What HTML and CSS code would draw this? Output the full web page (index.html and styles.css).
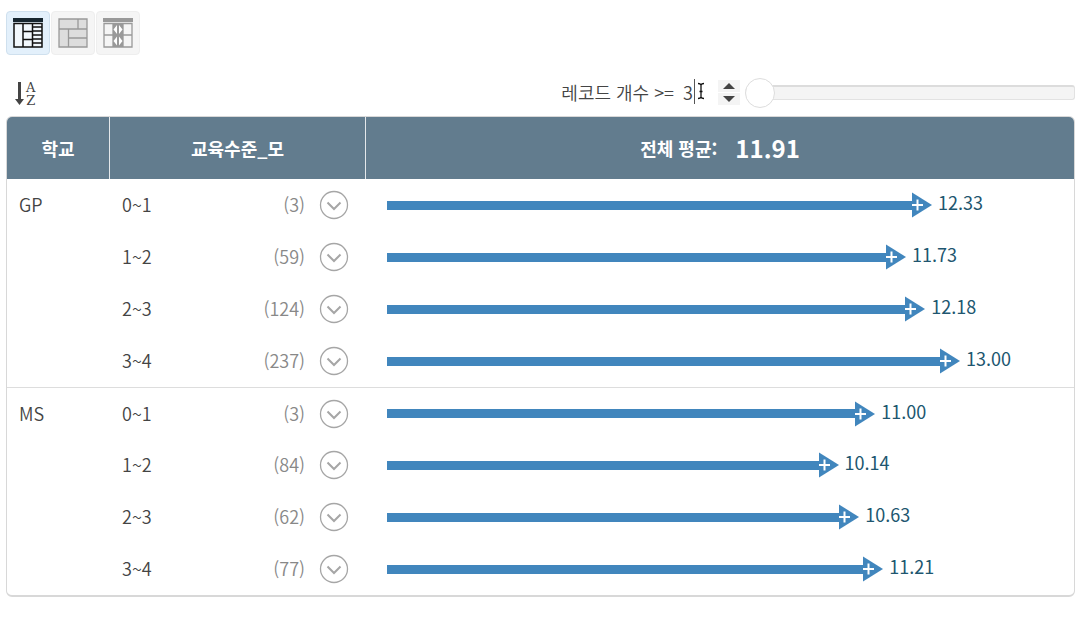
FILE: index.html
```html
<!DOCTYPE html>
<html lang="ko">
<head>
    <meta charset="UTF-8">
    <meta name="viewport" content="width=device-width, initial-scale=1.0">
    <title>전체 평균</title>
    <link rel="stylesheet" href="styles.css">
</head>
<body>
    <svg class="symbols" aria-hidden="true">
        <symbol id="chevron" viewBox="0 0 30 30">
            <circle cx="15" cy="15" r="13.5" fill="none" stroke="#a6a6a6" stroke-width="1.3"/>
            <path d="M8.5 12.5l6.5 6.5 6.5-6.5" fill="none" stroke="#a6a6a6" stroke-width="2"/>
        </symbol>
        <symbol id="head" viewBox="0 0 20 26">
            <path d="M0 0.5l20 12.5L0 25.5z" fill="#4186bd"/>
            <path d="M0 13h11M5.5 7.5v11" stroke="#fff" stroke-width="2"/>
        </symbol>
    </svg>
    <div class="views">
        <button class="view active" aria-label="table">
            <svg width="30" height="30" viewBox="0 0 30 30">
                <path d="M0 0h30v4H0z" fill="#17262f"/>
                <path d="M1 5.500h28v23.500H1z" fill="#f2f8fd" stroke="#111" stroke-width="1.500"/>
                <path d="M10 5v24M19.500 5v24M10 13.500h9.500M10 21.500h9.500M19.500 9h9.500M19.500 13h9.500M19.500 17h9.500M19.500 21h9.500M19.500 25h9.500" fill="none" stroke="#111" stroke-width="1.500"/>
            </svg>
        </button>
        <button class="view" aria-label="treemap">
            <svg width="30" height="30" viewBox="0 0 30 30">
                <path d="M1 1h28v28H1zM1 11h28M20 1v10M10.500 11v18M10.500 20H29" fill="#ddd" stroke="#999" stroke-width="1.300"/>
            </svg>
        </button>
        <button class="view" aria-label="matrix">
            <svg width="30" height="30" viewBox="0 0 30 30">
                <path d="M0 0h30v4H0z" fill="#999"/>
                <path d="M10 5h10v24H10z" fill="#999"/>
                <path d="M1 5.500h28v23.500H1zM1 17h28M10 5v24M20 5v24" fill="none" stroke="#999" stroke-width="1.300"/>
                <path d="M14 7v9l-3.500-4.500zM16 7v9l3.500-4.500zM14 18.500v9L10.500 23zM16 18.500v9l3.500-4.500z" fill="#fff"/>
            </svg>
        </button>
    </div>
    <div class="toolbar">
        <button class="sort" aria-label="sort">
            <svg width="9" height="24" viewBox="0 0 9 24">
                <path d="M4.500 0v19" stroke="#444" stroke-width="3"/>
                <path d="M0 17h9l-4.500 6z" fill="#444"/>
            </svg>
            <span class="letters"><span>A</span><span>Z</span></span>
        </button>
        <div class="filter">
            <label for="count">레코드 개수 &gt;=</label>
            <div class="number">
                <input type="text" id="count" value="3">
                <svg class="cursor" width="20" height="28" viewBox="0 0 20 28" aria-hidden="true">
                    <path d="M1.500 1v25" stroke="#555"/>
                    <path d="M5 5.500q2.500 0 3 1.500q.500-1.500 3-1.500M8 7v12M5 20.500q2.500 0 3-1.500q.500 1.500 3 1.500M6.500 13.500h3" fill="none" stroke="#111" stroke-width="1.300"/>
                </svg>
            </div>
            <div class="spinner">
                <button aria-label="up"><svg width="12" height="6" viewBox="0 0 12 6"><path d="M6 0l6 6H0z" fill="#444"/></svg></button>
                <button aria-label="down"><svg width="12" height="6" viewBox="0 0 12 6"><path d="M0 0h12L6 6z" fill="#444"/></svg></button>
            </div>
            <input type="range" id="range" min="3" max="237" value="3" aria-label="레코드 개수">
        </div>
    </div>
    <div class="panel">
        <table>
            <thead>
                <tr>
                    <th class="school">학교</th>
                    <th class="level">교육수준_모</th>
                    <th><div class="average">전체 평균: <span class="total">11.91</span></div></th>
                </tr>
            </thead>
            <tbody>
                <tr>
                    <td class="name" rowspan="4">GP</td>
                    <td><div class="item"><span>0~1</span><span class="records">(3)</span><button class="more" aria-label="more"><svg><use href="#chevron"/></svg></button></div></td>
                    <td><div class="bar"><div class="line" style="width: 81.7%"><svg><use href="#head"/></svg></div><span>12.33</span></div></td>
                </tr>
                <tr>
                    <td><div class="item"><span>1~2</span><span class="records">(59)</span><button class="more" aria-label="more"><svg><use href="#chevron"/></svg></button></div></td>
                    <td><div class="bar"><div class="line" style="width: 77.8%"><svg><use href="#head"/></svg></div><span>11.73</span></div></td>
                </tr>
                <tr>
                    <td><div class="item"><span>2~3</span><span class="records">(124)</span><button class="more" aria-label="more"><svg><use href="#chevron"/></svg></button></div></td>
                    <td><div class="bar"><div class="line" style="width: 80.7%"><svg><use href="#head"/></svg></div><span>12.18</span></div></td>
                </tr>
                <tr>
                    <td><div class="item"><span>3~4</span><span class="records">(237)</span><button class="more" aria-label="more"><svg><use href="#chevron"/></svg></button></div></td>
                    <td><div class="bar"><div class="line" style="width: 85.9%"><svg><use href="#head"/></svg></div><span>13.00</span></div></td>
                </tr>
            </tbody>
            <tbody>
                <tr>
                    <td class="name" rowspan="4">MS</td>
                    <td><div class="item"><span>0~1</span><span class="records">(3)</span><button class="more" aria-label="more"><svg><use href="#chevron"/></svg></button></div></td>
                    <td><div class="bar"><div class="line" style="width: 73.2%"><svg><use href="#head"/></svg></div><span>11.00</span></div></td>
                </tr>
                <tr>
                    <td><div class="item"><span>1~2</span><span class="records">(84)</span><button class="more" aria-label="more"><svg><use href="#chevron"/></svg></button></div></td>
                    <td><div class="bar"><div class="line" style="width: 67.7%"><svg><use href="#head"/></svg></div><span>10.14</span></div></td>
                </tr>
                <tr>
                    <td><div class="item"><span>2~3</span><span class="records">(62)</span><button class="more" aria-label="more"><svg><use href="#chevron"/></svg></button></div></td>
                    <td><div class="bar"><div class="line" style="width: 70.8%"><svg><use href="#head"/></svg></div><span>10.63</span></div></td>
                </tr>
                <tr>
                    <td><div class="item"><span>3~4</span><span class="records">(77)</span><button class="more" aria-label="more"><svg><use href="#chevron"/></svg></button></div></td>
                    <td><div class="bar"><div class="line" style="width: 74.4%"><svg><use href="#head"/></svg></div><span>11.21</span></div></td>
                </tr>
            </tbody>
        </table>
    </div>
</body>
</html>
```
FILE: styles.css
```css
* {
    box-sizing: border-box;
}
body {
    margin: 0;
    padding: 11px 3px 0 6px;
    background: #fff;
    font-family: "Noto Sans CJK KR", sans-serif;
    font-size: 18px;
    font-weight: 350;
    line-height: 26px;
    color: #444;
}
button, input {
    font: inherit;
    color: inherit;
    margin: 0;
    padding: 0;
    border: none;
    background: none;
}
button {
    cursor: pointer;
}
svg {
    display: block;
    flex: none;
}
.symbols {
    position: absolute;
    width: 0;
    height: 0;
}
.views {
    display: flex;
    gap: 1px;
}
.view {
    display: flex;
    align-items: center;
    justify-content: center;
    width: 44px;
    height: 44px;
    background: #f5f5f5;
    border: 1px solid #eee;
    border-radius: 4px;
}
.view.active {
    background: #e3f0fb;
    border-color: #cfe0ee;
}
.toolbar {
    display: flex;
    align-items: center;
    justify-content: space-between;
    height: 61px;
    padding-top: 14px;
}
.sort {
    display: flex;
    align-items: center;
    gap: 2px;
    padding: 2px 0 0 9px;
}
.letters {
    display: flex;
    flex-direction: column;
    font-family: "DejaVu Serif", serif;
    font-size: 13px;
    font-weight: normal;
    line-height: 13px;
}
.filter {
    display: flex;
    align-items: center;
    line-height: 28px;
}
.filter label {
    padding-bottom: 2px;
}
.number {
    position: relative;
    width: 35px;
    margin-left: 9px;
}
.number input {
    display: block;
    width: 100%;
    padding-bottom: 2px;
    outline: none;
}
.cursor {
    position: absolute;
    left: 10px;
    top: 0;
}
.spinner {
    display: flex;
    flex-direction: column;
    gap: 1px;
    width: 22px;
    margin-right: 5px;
}
.spinner button {
    display: flex;
    justify-content: center;
    align-items: center;
    height: 12px;
    background: #f4f4f4;
}
#range {
    -webkit-appearance: none;
    appearance: none;
    width: 330px;
    height: 30px;
}
#range::-webkit-slider-runnable-track {
    height: 15px;
    background: #f4f4f4;
    border: 1px solid #e2e2e2;
    border-top: 2px solid #dcdcdc;
    border-left: none;
    border-radius: 15px 6px 6px 15px;
}
#range::-webkit-slider-thumb {
    -webkit-appearance: none;
    width: 30px;
    height: 30px;
    margin-top: -9px;
    background: #fff;
    border: 1px solid #ddd;
    border-radius: 50%;
}
.panel {
    border: 1px solid #d8d8d8;
    border-bottom-width: 2px;
    border-radius: 6px;
    overflow: hidden;
}
table {
    width: 100%;
    table-layout: fixed;
    border-collapse: separate;
    border-spacing: 0;
}
th {
    height: 62px;
    padding: 0;
    background: #627c8e;
    color: #fff;
    font-weight: 700;
    border-right: 1px solid #e4e8eb;
}
th:last-child {
    border-right: none;
}
.school {
    width: 103px;
}
.level {
    width: 256px;
}
.average {
    display: flex;
    align-items: center;
    justify-content: center;
    gap: 18px;
}
.total {
    font-size: 24px;
}
td {
    height: 52px;
    padding: 0 20px 0 12px;
}
tbody + tbody tr:first-child td {
    border-top: 1px solid #ddd;
}
.name {
    vertical-align: top;
    padding-top: 12px;
}
.item {
    display: flex;
    align-items: center;
}
.item span {
    padding-bottom: 2px;
}
.records {
    margin-left: auto;
    color: #888;
}
.more {
    margin: 0 -3px 0 14px;
}
.more svg {
    width: 30px;
    height: 30px;
}
.bar {
    display: flex;
    align-items: center;
    padding-left: 9px;
}
.bar span {
    margin-left: 6px;
    padding-bottom: 6px;
    color: #20566f;
    font-weight: 400;
}
.line {
    display: flex;
    align-items: center;
    flex: none;
}
.line::before {
    content: "";
    flex: 1;
    height: 9px;
    background: #4186bd;
}
.line svg {
    width: 20px;
    height: 26px;
}
```
